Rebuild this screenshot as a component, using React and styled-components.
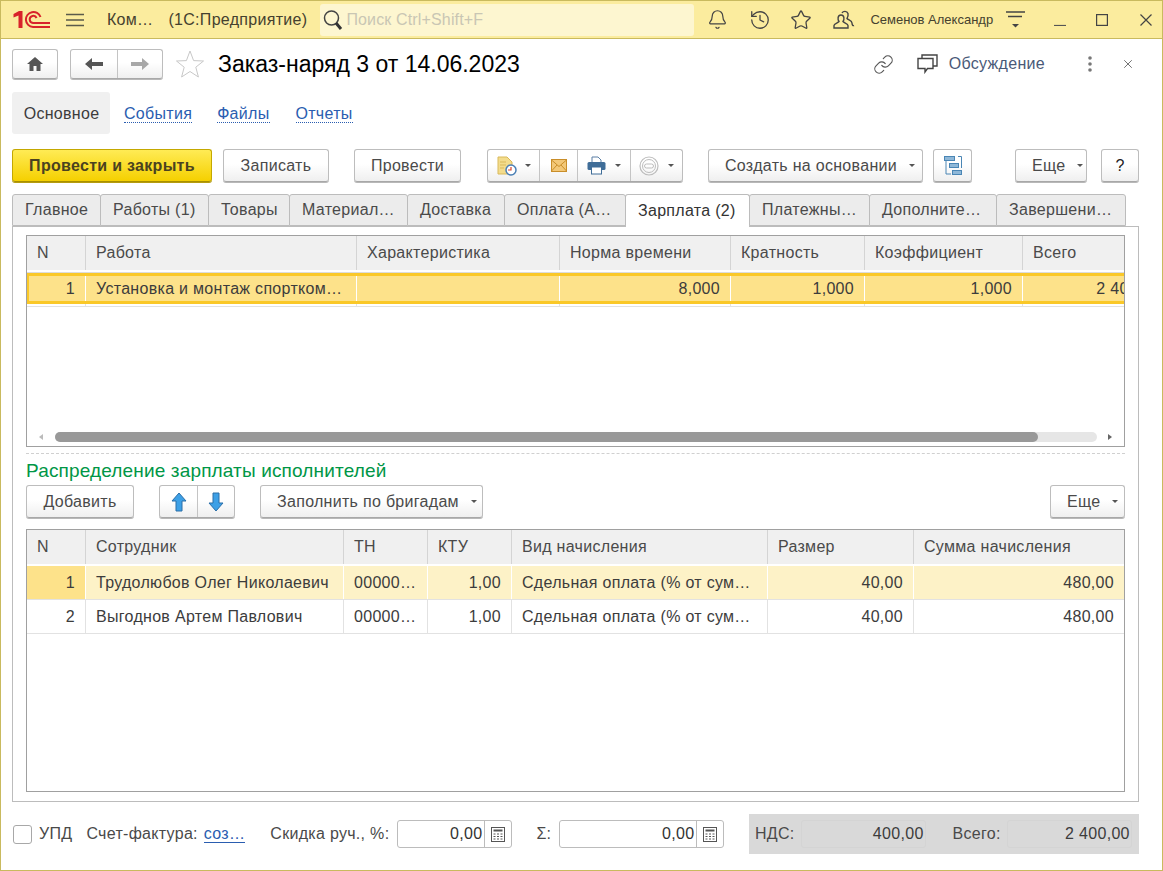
import React from "react";
import styled, { createGlobalStyle } from "styled-components";
import { Bell, History, Star, Link as LinkIcon, X } from "lucide-react";

const GlobalStyle = createGlobalStyle`
  html, body { margin: 0; padding: 0; background: #fff; }
  * { box-sizing: border-box; }
  body { font-family: "Liberation Sans", Arial, sans-serif; font-size: 16px; letter-spacing: 0.3px; color: #4a4a4a; }
`;

const Window = styled.div`
  width: 1163px;
  height: 871px;
  border: 1px solid #c9ba5e;
  display: flex;
  flex-direction: column;
  overflow: hidden;
`;

const TopBar = styled.div`
  height: 38px;
  flex: none;
  background: #fbec9e;
  border-bottom: 1px solid #c9ba5e;
  display: flex;
  align-items: center;
  color: #4a4636;
`;

const TopItem = styled.div`
  margin-left: ${p => p.$ml || 0}px;
  display: flex;
  align-items: center;
  flex: none;
  font-size: ${p => p.$size || 16}px;
  letter-spacing: ${p => (p.$size ? 0 : 0.3)}px;
  color: #45412f;
`;

const Search = styled.div`
  margin-left: 13px;
  width: 374px;
  height: 32px;
  background: #fdf6d0;
  border-radius: 3px;
  display: flex;
  align-items: center;
  padding-left: 3px;
  gap: 3px;
  font-size: 16px;
  letter-spacing: 0.15px;
  color: #c9c6b4;
  flex: none;
`;

const Content = styled.div`
  flex: 1;
  padding: 0 23px 0 11px;
  display: flex;
  flex-direction: column;
`;

const HeaderRow = styled.div`
  margin-top: 10px;
  height: 30px;
  display: flex;
  align-items: center;
  flex: none;
`;

const Title = styled.h1`
  margin: 0 0 0 13px;
  font-size: 23px;
  font-weight: 400;
  letter-spacing: 0;
  color: #000;
`;

const Spacer = styled.div`
  flex: 1;
`;

const Discuss = styled.span`
  margin-left: 11px;
  color: #4a5a78;
`;

const NavRow = styled.nav`
  margin-top: 13px;
  height: 42px;
  display: flex;
  align-items: center;
  flex: none;
`;

const NavActive = styled.div`
  width: 98px;
  height: 42px;
  padding: 2px 0 0 1px;
  background: #f0f0f0;
  border-radius: 3px;
  display: flex;
  align-items: center;
  justify-content: center;
  color: #3c3c3c;
`;

const NavLink = styled.a`
  margin: 2px 0 0 ${p => p.$ml}px;
  color: #2a5db0;
  border-bottom: 1px dotted #2a5db0;
  line-height: 17px;
`;

const Toolbar = styled.div`
  margin-top: ${p => p.$mt || 0}px;
  height: 33px;
  display: flex;
  flex: none;
`;

const Button = styled.button`
  width: ${p => p.$w}px;
  margin-left: ${p => p.$ml || 0}px;
  height: ${p => p.$h || 33}px;
  flex: none;
  border: 1px solid #bdbdbd;
  border-bottom-color: #a8a8a8;
  border-radius: 3px;
  background: linear-gradient(#ffffff 45%, #efefef);
  box-shadow: 0 1px 0 #b8b8b8;
  font: inherit;
  letter-spacing: inherit;
  color: #4a4a4a;
  padding: 0 0 0 ${p => (p.$menu ? 16 : 0)}px;
  display: flex;
  align-items: center;
  justify-content: ${p => (p.$menu ? "flex-start" : "center")};
  gap: 12px;
`;

const PrimaryButton = styled(Button)`
  border-color: #c4a800;
  border-bottom-color: #a89000;
  background: linear-gradient(#ffeb55, #f5d000);
  box-shadow: 0 1px 0 #b59c10;
  font-weight: 700;
  color: #4a4220;
`;

const HelpButton = styled(Button)`
  color: #222;
`;

const Group = styled.div`
  width: ${p => p.$w}px;
  margin-left: ${p => p.$ml || 0}px;
  height: ${p => p.$h || 33}px;
  flex: none;
  display: flex;
  border: 1px solid #bdbdbd;
  border-bottom-color: #a8a8a8;
  border-radius: 3px;
  background: linear-gradient(#ffffff 45%, #efefef);
  box-shadow: 0 1px 0 #b8b8b8;
`;

const GroupCell = styled.div`
  width: ${p => p.$w}px;
  flex: none;
  display: flex;
  align-items: center;
  justify-content: center;
  gap: ${p => p.$gap || 0}px;
  border-right: 1px solid #c4c4c4;
  &:last-child { border-right: none; }
`;

const Caret = styled.i`
  width: 0;
  height: 0;
  border-left: 3px solid transparent;
  border-right: 3px solid transparent;
  border-top: 3px solid #555;
  display: inline-block;
  flex: none;
`;

const Tabs = styled.div`
  margin-top: 12px;
  height: 33px;
  display: flex;
  flex: none;
  position: relative;
  z-index: 1;
`;

const Tab = styled.div`
  width: ${p => p.$w}px;
  flex: none;
  height: ${p => (p.$active ? 33 : 32)}px;
  margin-right: -1px;
  padding: 0 0 ${p => (p.$active ? 1 : 0)}px 12px;
  display: flex;
  align-items: center;
  white-space: nowrap;
  background: ${p => (p.$active ? "#fff" : "#ececec")};
  border: 1px solid #bcbcbc;
  border-bottom: ${p => (p.$active ? "none" : "1px solid #bcbcbc")};
  border-radius: 3px 3px 0 0;
  color: ${p => (p.$active ? "#333" : "#4a4a4a")};
`;

const Panel = styled.div`
  margin-top: -1px;
  height: 576px;
  flex: none;
  border: 1px solid #bcbcbc;
  padding: 8px 13px;
  display: flex;
  flex-direction: column;
`;

const Table = styled.div`
  height: ${p => p.$h}px;
  margin-top: ${p => p.$mt || 0}px;
  flex: none;
  border: 1px solid #a0a0a0;
  overflow: hidden;
  display: flex;
  flex-direction: column;
`;

const Row = styled.div`
  display: grid;
  grid-template-columns: ${p => p.$cols};
  width: max-content;
  min-width: 100%;
  flex: none;
`;

const HeadRow = styled(Row)`
  height: 36px;
  background: #f0f0f0;
  border-bottom: 2px solid #fff;
  box-shadow: 0 1px 0 #dcdcdc;
`;

const HeadCell = styled.div`
  padding: 0 10px;
  display: flex;
  align-items: center;
  border-right: 1px solid #d4d4d4;
  color: #4a4a4a;
  white-space: nowrap;
  &:last-child { border-right: none; }
`;

const BodyRow = styled(Row)`
  height: ${p => p.$h || 34}px;
  border-bottom: 1px solid #e2e2e2;
`;

const CurrentRow = styled(Row)`
  margin-top: 1px;
  height: 31px;
  background: #fde28a;
  border-top: 3px solid #fac828;
  border-bottom: 3px solid #fac828;
  box-shadow: inset 2px 0 0 #fac828;
`;

const Cell = styled.div`
  padding: 0 10px;
  display: flex;
  align-items: center;
  justify-content: ${p => (p.$right ? "flex-end" : "flex-start")};
  border-right: 1px solid ${p => (p.$line ? "#e2e2e2" : "#fff")};
  background: ${p => p.$bg || "transparent"};
  color: #3c3c3c;
  white-space: nowrap;
  overflow: hidden;
  &:last-child { border-right: none; }
`;

const Scroll = styled.div`
  margin-top: auto;
  margin-bottom: 4px;
  height: 10px;
  flex: none;
  display: flex;
  align-items: center;
  padding: 0 12px;
`;

const ScrollArrow = styled.i`
  width: 0;
  height: 0;
  border-top: 3px solid transparent;
  border-bottom: 3px solid transparent;
  border-${p => (p.$right ? "left" : "right")}: 4px solid ${p => (p.$right ? "#666" : "#bbb")};
  flex: none;
`;

const Track = styled.div`
  margin: 0 11px 0 12px;
  flex: 1;
  height: 10px;
  border-radius: 5px;
  background: #e6e6e6;
`;

const Thumb = styled.div`
  height: 10px;
  border-radius: 5px;
  background: #999;
`;

const Dashed = styled.div`
  margin-top: 6px;
  border-top: 1px dashed #d0d0d0;
  flex: none;
`;

const SectionTitle = styled.div`
  margin-top: 7px;
  height: 20px;
  line-height: 20px;
  font-size: 19px;
  letter-spacing: 0.15px;
  color: #009646;
  flex: none;
`;

const Footer = styled.div`
  margin-top: 12px;
  height: 40px;
  display: flex;
  align-items: center;
  flex: none;
`;

const Check = styled.div`
  margin-left: 1px;
  width: 19px;
  height: 19px;
  border: 1px solid #a8a8a8;
  border-radius: 3px;
  flex: none;
`;

const Label = styled.span`
  margin-left: ${p => p.$ml || 0}px;
  white-space: nowrap;
  color: #4a4a4a;
`;

const LinkText = styled.a`
  margin-left: 6px;
  color: #2a5db0;
  border-bottom: 1px solid #2a5db0;
  line-height: 17px;
`;

const Field = styled.div`
  width: ${p => p.$w}px;
  margin-left: ${p => p.$ml}px;
  height: 28px;
  flex: none;
  border: 1px solid #bcbcbc;
  border-radius: 3px;
  display: flex;
  align-items: center;
  color: #333;
`;

const FieldValue = styled.div`
  flex: 1;
  text-align: right;
  padding-right: 2px;
`;

const FieldButton = styled.div`
  width: 27px;
  height: 100%;
  border-left: 1px solid #bcbcbc;
  display: flex;
  align-items: center;
  justify-content: center;
`;

const Totals = styled.div`
  margin-left: auto;
  width: 390px;
  height: 40px;
  flex: none;
  background: #d9d9d9;
  display: flex;
  align-items: center;
  padding-left: 6px;
`;

const TotalValue = styled.div`
  width: ${p => p.$w}px;
  margin-left: ${p => p.$ml}px;
  height: 28px;
  flex: none;
  border: 1px solid #d4d4d4;
  border-radius: 3px;
  text-align: right;
  line-height: 26px;
  padding-right: 1px;
  color: #3c3c3c;
`;

const iconLine = { fill: "none", stroke: "#444", strokeWidth: 1.4 };

const Logo = () => (
  <svg width="38" height="18" viewBox="0 0 38 18">
    <path d="M0.5 3 L6 0 H9.5 V17 H5.5 V4.5 L0.5 6.5 Z" fill="#d8232a" />
    <g fill="none" stroke="#d8232a" strokeWidth="2">
      <path d="M27.5 6 A7.5 7.5 0 1 0 20 16 H37" />
      <path d="M23.6 7 A3.6 3.6 0 1 0 20 12 H37" />
    </g>
  </svg>
);

const Burger = () => (
  <svg width="18" height="14" viewBox="0 0 18 14">
    <path d="M0 1.5H18M0 7H18M0 12.5H18" stroke="#5a5a4a" strokeWidth="1.3" />
  </svg>
);

const SearchIcon = () => (
  <svg width="20" height="22" viewBox="0 0 20 22">
    <circle cx="8.5" cy="9" r="7" fill="none" stroke="#444" strokeWidth="1.5" />
    <path d="M13 14 L18 20" stroke="#333" strokeWidth="3" />
  </svg>
);

const UsersIcon = () => (
  <svg width="22" height="20" viewBox="0 0 22 20">
    <path {...iconLine} d="M1 18 V15.5 C1 13.5 5 13 6 11.5 C4.5 9.5 4.5 5 8 5 C11.5 5 11.5 9.5 10 11.5 C11 13 15 13.5 15 15.5 V18 Z" />
    <path {...iconLine} d="M9 3 C10 1 14 0.5 15 3.5 C15.5 5.5 14.5 7.5 14 8.5 C15 10 19 10.5 19 13 C19 15 20 16 21 15.5" />
  </svg>
);

const FilterIcon = () => (
  <svg width="20" height="17" viewBox="0 0 20 17">
    <path d="M1 1H20M3 5.5H17" stroke="#444" strokeWidth="1.3" />
    <path d="M7 13H14L10.5 16.5Z" fill="#444" />
  </svg>
);

const MinimizeIcon = () => (
  <svg width="12" height="12" viewBox="0 0 12 12">
    <path d="M0 11.5H12" stroke="#555" strokeWidth="1.2" />
  </svg>
);

const MaximizeIcon = () => (
  <svg width="12" height="12" viewBox="0 0 12 12">
    <rect x="0.6" y="0.6" width="10.8" height="10.8" fill="none" stroke="#444" strokeWidth="1.2" />
  </svg>
);

const CloseIcon = () => (
  <svg width="12" height="12" viewBox="0 0 12 12">
    <path d="M0.5 0.5 L11.5 11.5 M11.5 0.5 L0.5 11.5" stroke="#444" strokeWidth="1.2" />
  </svg>
);

const HomeIcon = () => (
  <svg width="16" height="14" viewBox="0 0 16 14">
    <path d="M8 0 L16 7 H13.5 V14 H9.5 V9 H6.5 V14 H2.5 V7 H0 Z" fill="#555" />
  </svg>
);

const ArrowIcon = ({ right, color }) => (
  <svg width="18" height="12" viewBox="0 0 18 12">
    <path
      transform={right ? "rotate(180 9 6)" : undefined}
      d="M0 6 L7 0 V4 H18 V8 H7 V12 Z"
      fill={color}
    />
  </svg>
);

const BigStar = () => (
  <svg width="30" height="30" viewBox="0 0 30 30">
    <path
      d="M15 2 L18.6 11.6 L28.5 12 L20.8 18.2 L23.4 28 L15 22.5 L6.6 28 L9.2 18.2 L1.5 12 L11.4 11.6 Z"
      fill="none"
      stroke="#c8c8c8"
    />
  </svg>
);

const ChatIcon = () => (
  <svg width="21" height="20" viewBox="0 0 21 20">
    <path {...iconLine} d="M5 4 V1 H20 V12 H16" />
    <path {...iconLine} d="M1 4.5 H16 V14.5 H10.5 L8 18 V14.5 H1 Z" />
  </svg>
);

const Dots = () => (
  <svg width="4" height="16" viewBox="0 0 4 16">
    <g fill="#777">
      <circle cx="2" cy="2" r="1.8" />
      <circle cx="2" cy="8" r="1.8" />
      <circle cx="2" cy="14" r="1.8" />
    </g>
  </svg>
);

const DocIcon = () => (
  <svg width="20" height="20" viewBox="0 0 20 20">
    <path d="M1 1 H10 L15 6 V18 H1 Z" fill="#f3dc8c" stroke="#d9b95a" />
    <path d="M3 6H9M3 9H9M3 12H7" stroke="#d9b95a" />
    <circle cx="14" cy="14" r="5" fill="#fff" stroke="#4a7fb5" strokeWidth="1.5" />
    <path d="M14 11V14H11" stroke="#d8452a" strokeWidth="1.2" fill="none" />
  </svg>
);

const MailIcon = () => (
  <svg width="16" height="13" viewBox="0 0 16 13">
    <rect x="0.5" y="0.5" width="15" height="12" fill="#f3c878" stroke="#c98e2a" />
    <path d="M0.5 1 L8 7.5 L15.5 1M0.5 12 L6 6M15.5 12 L10 6" fill="none" stroke="#c98e2a" />
  </svg>
);

const PrintIcon = () => (
  <svg width="19" height="19" viewBox="0 0 19 19">
    <path d="M5 8 V1 H11 L14 4 V8 Z" fill="#fff" stroke="#5b7fa5" />
    <rect x="0.5" y="6" width="18" height="8" rx="1.5" fill="#3f6d98" />
    <rect x="4.5" y="11" width="10" height="7" fill="#fff" stroke="#3f6d98" />
  </svg>
);

const StampIcon = () => (
  <svg width="20" height="20" viewBox="0 0 20 20">
    <g fill="none" stroke="#bdbdbd">
      <circle cx="10" cy="10" r="9" strokeWidth="1.2" />
      <circle cx="10" cy="10" r="6.5" />
      <rect x="5.5" y="8" width="9" height="4" rx="2" />
    </g>
  </svg>
);

const FlowIcon = () => (
  <svg width="20" height="21" viewBox="0 0 20 21">
    <g fill="#8fb8d8" stroke="#4a86b5">
      <rect x="1.5" y="1.5" width="10" height="4" />
      <rect x="6.5" y="8.5" width="9" height="4" />
      <rect x="9.5" y="15.5" width="9" height="4" />
    </g>
    <path d="M3 6V19H8M15 1.5H18.5V13" fill="none" stroke="#4a86b5" />
  </svg>
);

const VArrow = ({ down }) => (
  <svg width="16" height="20" viewBox="0 0 16 20">
    <path
      transform={down ? "rotate(180 8 10)" : undefined}
      d="M8 1 L15 9 H11 V19 H5 V9 H1 Z"
      fill="#3da0e6"
      stroke="#2a6ea8"
    />
  </svg>
);

const CalcIcon = () => (
  <svg width="14" height="15" viewBox="0 0 14 15">
    <rect x="0.5" y="0.5" width="13" height="14" fill="#fff" stroke="#555" />
    <rect x="2.5" y="2.5" width="9" height="2" fill="#555" />
    <path d="M2.5 7H4.5M6 7H8M9.5 7H11.5M2.5 9.5H4.5M6 9.5H8M9.5 9.5H11.5M2.5 12H4.5M6 12H8M9.5 12H11.5" stroke="#555" />
  </svg>
);

const TABS = [
  ["Главное", 89],
  ["Работы (1)", 109],
  ["Товары", 82],
  ["Материал…", 119],
  ["Доставка", 98],
  ["Оплата (А…", 122],
  ["Зарплата (2)", 125, true],
  ["Платежны…", 121],
  ["Дополните…", 128],
  ["Завершени…", 130]
];

const WORK_COLS = "59px 271px 203px 171px 134px 158px 148px";
const WORK_HEAD = ["N", "Работа", "Характеристика", "Норма времени", "Кратность", "Коэффициент", "Всего"];

const PAY_COLS = "59px 258px 84px 84px 256px 146px 1fr";
const PAY_HEAD = ["N", "Сотрудник", "ТН", "КТУ", "Вид начисления", "Размер", "Сумма начисления"];
const PAY_ROWS = [
  ["1", "Трудолюбов Олег Николаевич"],
  ["2", "Выгоднов Артем Павлович"]
];

const App = () => (
  <Window>
    <GlobalStyle />
    <TopBar>
      <TopItem $ml={12}><Logo /></TopItem>
      <TopItem $ml={15}><Burger /></TopItem>
      <TopItem $ml={23}>Ком…</TopItem>
      <TopItem $ml={15}>(1С:Предприятие)</TopItem>
      <Search>
        <SearchIcon />
        Поиск Ctrl+Shift+F
      </Search>
      <TopItem $ml={13}><Bell size={21} strokeWidth={1.4} color="#444" /></TopItem>
      <TopItem $ml={21}><History size={22} strokeWidth={1.4} color="#444" /></TopItem>
      <TopItem $ml={19}><Star size={22} strokeWidth={1.4} color="#444" /></TopItem>
      <TopItem $ml={21}><UsersIcon /></TopItem>
      <TopItem $ml={15} $size={13}>Семенов Александр</TopItem>
      <TopItem $ml={12}><FilterIcon /></TopItem>
      <TopItem $ml={29}><MinimizeIcon /></TopItem>
      <TopItem $ml={30}><MaximizeIcon /></TopItem>
      <TopItem $ml={32}><CloseIcon /></TopItem>
    </TopBar>

    <Content>
      <HeaderRow>
        <Button $w={46} $h={30}><HomeIcon /></Button>
        <Group $w={93} $ml={12} $h={30}>
          <GroupCell $w={47}><ArrowIcon color="#555" /></GroupCell>
          <GroupCell $w={44}><ArrowIcon right color="#a8a8a8" /></GroupCell>
        </Group>
        <TopItem $ml={12}><BigStar /></TopItem>
        <Title>Заказ-наряд 3 от 14.06.2023</Title>
        <Spacer />
        <LinkIcon size={21} strokeWidth={1.3} color="#555" />
        <TopItem $ml={23}><ChatIcon /></TopItem>
        <Discuss>Обсуждение</Discuss>
        <TopItem $ml={43}><Dots /></TopItem>
        <TopItem $ml={29}><X size={14} strokeWidth={1.4} color="#555" /></TopItem>
        <TopItem $ml={4} />
      </HeaderRow>

      <NavRow>
        <NavActive>Основное</NavActive>
        <NavLink $ml={14}>События</NavLink>
        <NavLink $ml={25}>Файлы</NavLink>
        <NavLink $ml={26}>Отчеты</NavLink>
      </NavRow>

      <Toolbar $mt={15}>
        <PrimaryButton $w={200}>Провести и закрыть</PrimaryButton>
        <Button $w={106} $ml={11}>Записать</Button>
        <Button $w={107} $ml={25}>Провести</Button>
        <Group $w={196} $ml={26}>
          <GroupCell $w={52} $gap={8}><DocIcon /><Caret /></GroupCell>
          <GroupCell $w={38}><MailIcon /></GroupCell>
          <GroupCell $w={53} $gap={9}><PrintIcon /><Caret /></GroupCell>
          <GroupCell $w={51} $gap={9}><StampIcon /><Caret /></GroupCell>
        </Group>
        <Button $w={215} $ml={25} $menu>Создать на основании <Caret /></Button>
        <Button $w={39} $ml={10}><FlowIcon /></Button>
        <Button $w={72} $ml={43} $menu>Еще <Caret /></Button>
        <HelpButton $w={38} $ml={14}>?</HelpButton>
      </Toolbar>

      <Tabs>
        {TABS.map(([name, w, active]) => (
          <Tab key={name} $w={w} $active={active}>{name}</Tab>
        ))}
      </Tabs>

      <Panel>
        <Table $h={212}>
          <HeadRow $cols={WORK_COLS}>
            {WORK_HEAD.map(h => <HeadCell key={h}>{h}</HeadCell>)}
          </HeadRow>
          <CurrentRow $cols={WORK_COLS}>
            <Cell $right>1</Cell>
            <Cell>Установка и монтаж спортком…</Cell>
            <Cell />
            <Cell $right>8,000</Cell>
            <Cell $right>1,000</Cell>
            <Cell $right>1,000</Cell>
            <Cell $right>2 400,00</Cell>
          </CurrentRow>
          <BodyRow $cols={WORK_COLS} $h={3}>
            {WORK_HEAD.map(h => <Cell key={h} $line />)}
          </BodyRow>
          <Scroll>
            <ScrollArrow />
            <Track><Thumb style={{ width: `${(982 / 1041) * 100}%` }} /></Track>
            <ScrollArrow $right />
          </Scroll>
        </Table>

        <Dashed />
        <SectionTitle>Распределение зарплаты исполнителей</SectionTitle>

        <Toolbar $mt={4}>
          <Button $w={108}>Добавить</Button>
          <Group $w={76} $ml={25}>
            <GroupCell $w={38}><VArrow /></GroupCell>
            <GroupCell $w={36}><VArrow down /></GroupCell>
          </Group>
          <Button $w={223} $ml={25} $menu>Заполнить по бригадам <Caret /></Button>
          <Button $w={75} $ml={567} $menu>Еще <Caret /></Button>
        </Toolbar>

        <Table $h={263} $mt={11}>
          <HeadRow $cols={PAY_COLS}>
            {PAY_HEAD.map(h => <HeadCell key={h}>{h}</HeadCell>)}
          </HeadRow>
          {PAY_ROWS.map(([n, name], i) => {
            const bg = i === 0 ? "#fdf2c7" : undefined;
            return (
              <BodyRow key={n} $cols={PAY_COLS}>
                <Cell $right $bg={i === 0 ? "#fde28a" : undefined} $line={i > 0}>{n}</Cell>
                <Cell $bg={bg} $line={i > 0}>{name}</Cell>
                <Cell $bg={bg} $line={i > 0}>00000…</Cell>
                <Cell $right $bg={bg} $line={i > 0}>1,00</Cell>
                <Cell $bg={bg} $line={i > 0}>Сдельная оплата (% от сум…</Cell>
                <Cell $right $bg={bg} $line={i > 0}>40,00</Cell>
                <Cell $right $bg={bg} $line={i > 0}>480,00</Cell>
              </BodyRow>
            );
          })}
        </Table>
      </Panel>

      <Footer>
        <Check />
        <Label $ml={7}>УПД</Label>
        <Label $ml={14}>Счет-фактура:</Label>
        <LinkText>соз…</LinkText>
        <Label $ml={25}>Скидка руч., %:</Label>
        <Field $w={115} $ml={8}>
          <FieldValue>0,00</FieldValue>
          <FieldButton><CalcIcon /></FieldButton>
        </Field>
        <Label $ml={24}>Σ:</Label>
        <Field $w={165} $ml={8}>
          <FieldValue>0,00</FieldValue>
          <FieldButton><CalcIcon /></FieldButton>
        </Field>
        <Totals>
          <Label>НДС:</Label>
          <TotalValue $w={125} $ml={6}>400,00</TotalValue>
          <Label $ml={27}>Всего:</Label>
          <TotalValue $w={125} $ml={6}>2 400,00</TotalValue>
        </Totals>
      </Footer>
    </Content>
  </Window>
);

export default App;
